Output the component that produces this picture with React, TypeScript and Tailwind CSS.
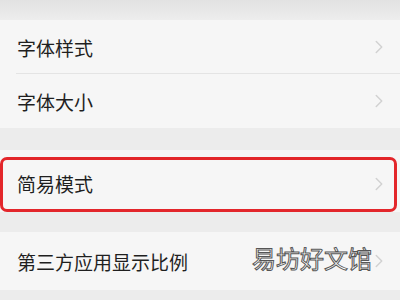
import { ChevronRight } from "lucide-react";

const font = { fontFamily: '"Noto Sans CJK SC", "Noto Sans", sans-serif' };

function Row({ label, h, divider }: { label: string; h: string; divider?: boolean }) {
  return (
    <div className={`relative flex items-center justify-between pl-[17px] pr-[10px] ${h}`}>
      <span className="text-[19px] leading-none text-[#1f1f1f]">{label}</span>
      <ChevronRight className="w-[22px] h-[22px] text-[#d2d2d2]" strokeWidth={1.6} />
      {divider && <div className="absolute left-[16px] right-0 bottom-0 h-px bg-[#e4e4e4]" />}
    </div>
  );
}

export default function App() {
  return (
    <div className="w-[400px] h-[300px] overflow-hidden bg-[#ececec] flex flex-col" style={font}>
      {/* top band */}
      <div className="h-[20px] bg-gradient-to-b from-[#e2e2e2] to-[#ededed]" />

      {/* font card */}
      <div className="bg-[#f6f6f6]">
        <Row label="字体样式" h="h-[54px]" divider />
        <Row label="字体大小" h="h-[54px]" />
      </div>

      <div className="h-[22px]" />

      {/* simple mode card, highlighted */}
      <div className="relative bg-[#f6f6f6] h-[62px] flex flex-col justify-end">
        <Row label="简易模式" h="h-[57px]" />
        <div className="absolute left-0 right-[3px] top-[7px] bottom-0 border-[3px] border-[#e3262b] rounded-[7px]" />
      </div>

      <div className="h-[20px]" />

      {/* third party card */}
      <div className="relative bg-[#f6f6f6] h-[58px]">
        <Row label="第三方应用显示比例" h="h-[58px]" />
        <span
          className="absolute left-[252px] top-[14px] text-[24px] leading-none text-white"
          style={{ WebkitTextStroke: "1px #555555", fontFamily: '"Noto Sans CJK SC", sans-serif' }}
        >
          易坊好文馆
        </span>
      </div>
    </div>
  );
}
